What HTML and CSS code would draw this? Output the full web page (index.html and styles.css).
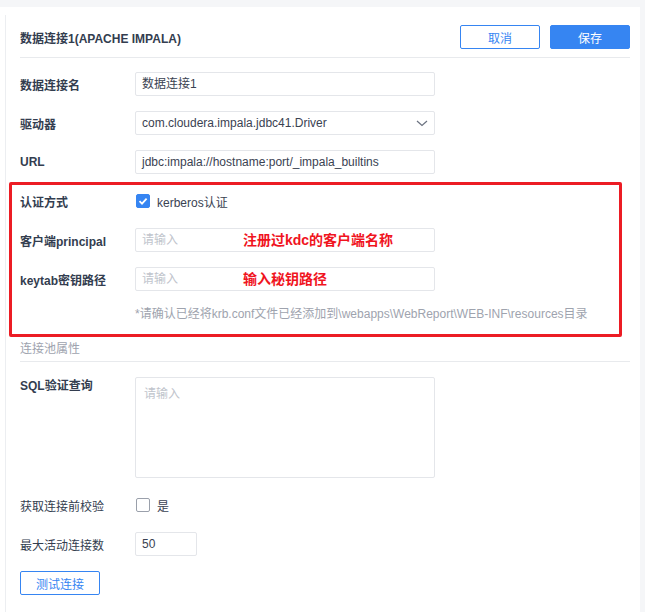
FILE: index.html
```html
<!DOCTYPE html>
<html>
<head>
<meta charset="utf-8">
<link rel="stylesheet" href="styles.css">
</head>
<body>
<div class="page">
  <div class="content">
    <div class="header">
      <div class="title">数据连接1(APACHE IMPALA)</div>
      <div class="actions">
        <button class="btn btn-outline">取消</button>
        <button class="btn btn-primary">保存</button>
      </div>
    </div>
    <div class="form">
      <div class="row">
        <div class="label bold">数据连接名</div>
        <div class="input">数据连接1</div>
      </div>
      <div class="row">
        <div class="label bold">驱动器</div>
        <div class="input select">com.cloudera.impala.jdbc41.Driver
          <svg class="chev" width="12" height="7" viewBox="0 0 12 7"><path d="M1 1 L6 5.5 L11 1" fill="none" stroke="#6b7280" stroke-width="1.2"/></svg>
        </div>
      </div>
      <div class="row">
        <div class="label bold">URL</div>
        <div class="input">jdbc:impala://hostname:port/_impala_builtins</div>
      </div>
      <div class="row">
        <div class="label bold">认证方式</div>
        <div class="check-wrap">
          <span class="checkbox checked"><svg width="14" height="14" viewBox="0 0 14 14"><path d="M3.5 7.2 L6 9.6 L10.6 4.6" fill="none" stroke="#fff" stroke-width="1.8"/></svg></span>
          <span class="check-text">kerberos认证</span>
        </div>
      </div>
      <div class="row">
        <div class="label bold">客户端principal</div>
        <div class="input placeholder">请输入<span class="note">注册过kdc的客户端名称</span></div>
      </div>
      <div class="row">
        <div class="label bold">keytab密钥路径</div>
        <div class="input placeholder">请输入<span class="note">输入秘钥路径</span></div>
      </div>
      <div class="hint">*请确认已经将krb.conf文件已经添加到\webapps\WebReport\WEB-INF\resources目录</div>
      <div class="section">连接池属性</div>
      <div class="row row-top">
        <div class="label bold">SQL验证查询</div>
        <div class="textarea placeholder">请输入</div>
      </div>
      <div class="row">
        <div class="label">获取连接前校验</div>
        <div class="check-wrap">
          <span class="checkbox"></span>
          <span class="check-text">是</span>
        </div>
      </div>
      <div class="row">
        <div class="label">最大活动连接数</div>
        <div class="input small">50</div>
      </div>
      <div class="row">
        <button class="btn btn-outline">测试连接</button>
      </div>
    </div>
  </div>
</div>
<div class="redbox"></div>
</body>
</html>
```
FILE: styles.css
```css
html, body {
  margin: 0;
  padding: 0;
}
body {
  background: #f5f6f8;
  font-family: "Liberation Sans", "Noto Sans CJK SC", sans-serif;
  font-size: 12px;
  color: #333d4f;
  position: relative;
  width: 645px;
  height: 612px;
  overflow: hidden;
}
.page {
  margin-top: 7px;
  width: 640px;
  height: 605px;
  background: #fff;
  box-sizing: border-box;
  padding: 8px 10px 0 5px;
}
.content {
  border-left: 1px solid #eceef1;
  padding-left: 14px;
  height: 100%;
  box-sizing: border-box;
}
.header {
  display: flex;
  align-items: center;
  justify-content: space-between;
  padding: 10px 0 8px;
  border-bottom: 1px solid #e8eaed;
}
.title {
  font-size: 12px;
  font-weight: bold;
  color: #333d4f;
}
.actions {
  display: flex;
  gap: 10px;
}
.btn {
  width: 80px;
  height: 24px;
  box-sizing: border-box;
  font-family: "Liberation Sans", "Noto Sans CJK SC", sans-serif;
  font-size: 12px;
  border-radius: 2px;
  padding: 0;
  cursor: pointer;
}
.btn-outline {
  background: #fff;
  border: 1px solid #3685f2;
  color: #3685f2;
}
.btn-primary {
  background: #3685f2;
  border: 1px solid #3685f2;
  color: #fff;
}
.form {
  display: flex;
  flex-direction: column;
  gap: 15px;
  padding-top: 14px;
}
.row {
  display: flex;
  align-items: center;
  min-height: 24px;
}
.row-top {
  align-items: flex-start;
}
.row-top .label {
  line-height: 18px;
}
.label {
  width: 115px;
  flex: none;
  color: #333d4f;
}
.label.bold {
  font-weight: bold;
}
.input {
  position: relative;
  width: 300px;
  height: 24px;
  box-sizing: border-box;
  border: 1px solid #e4e6ea;
  border-radius: 2px;
  padding: 0 6px;
  line-height: 22px;
  color: #3a4252;
  white-space: nowrap;
}
.input.small {
  width: 62px;
}
.select .chev {
  position: absolute;
  right: 6px;
  top: 8px;
}
.placeholder {
  color: #c0c4cc;
}
.note {
  position: absolute;
  left: 107px;
  top: 0;
  font-size: 14px;
  font-weight: bold;
  color: #f0141e;
}
.textarea {
  width: 300px;
  height: 101px;
  box-sizing: border-box;
  border: 1px solid #e4e6ea;
  border-radius: 2px;
  padding: 6px 8px;
}
.check-wrap {
  display: flex;
  align-items: center;
  gap: 7px;
  padding-left: 1px;
}
.checkbox {
  width: 14px;
  height: 14px;
  box-sizing: border-box;
  border: 1px solid #9aa0ab;
  border-radius: 2px;
  display: block;
}
.checkbox.checked {
  background: #3685f2;
  border-color: #3685f2;
}
.checkbox svg {
  display: block;
  margin: -1px;
}
.check-text {
  color: #3a4252;
}
.hint {
  padding-left: 115px;
  line-height: 16px;
  color: #9ea3ae;
  white-space: nowrap;
}
.section {
  margin-top: 0;
  line-height: 24px;
  color: #9ea3ae;
  border-bottom: 1px solid #e8eaed;
}
.redbox {
  position: absolute;
  left: 9px;
  top: 182px;
  width: 613px;
  height: 155px;
  box-sizing: border-box;
  border: 3px solid #ec1c24;
  border-radius: 2px;
}
```
